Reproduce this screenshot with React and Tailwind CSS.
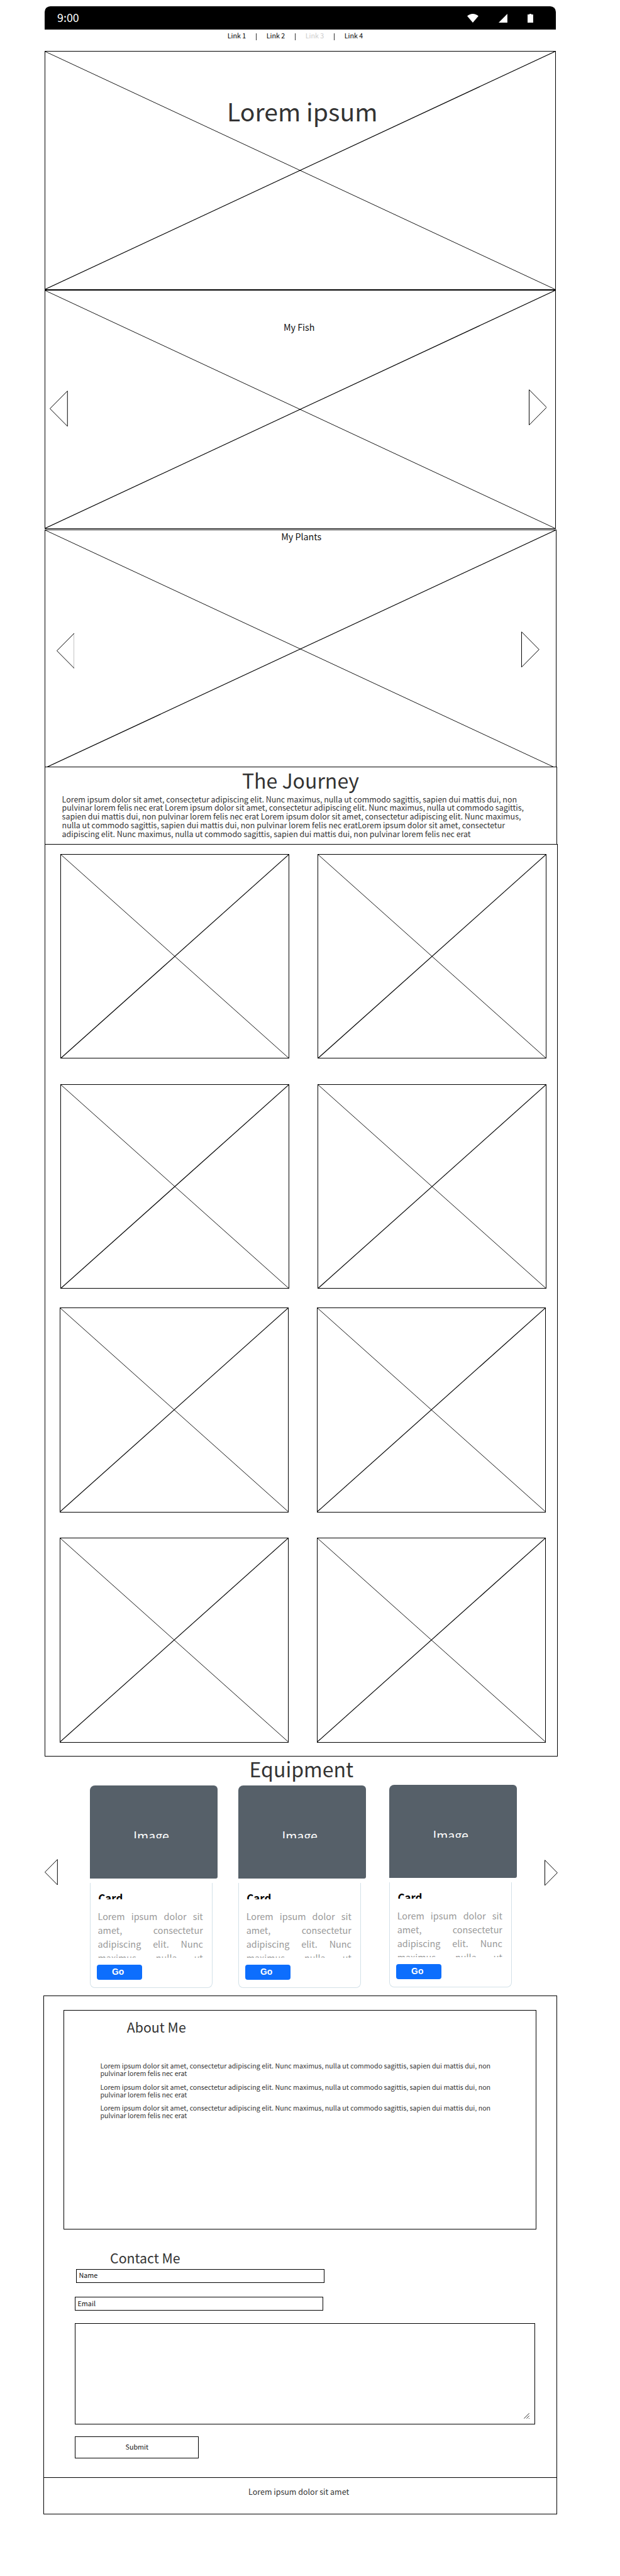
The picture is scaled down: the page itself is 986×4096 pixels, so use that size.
const LOREM_LINE =
  "Lorem ipsum dolor sit amet, consectetur adipiscing elit. Nunc maximus, nulla ut commodo sagittis, sapien dui mattis dui, non";

const JOURNEY = [
  LOREM_LINE,
  "pulvinar lorem felis nec erat Lorem ipsum dolor sit amet, consectetur adipiscing elit. Nunc maximus, nulla ut commodo sagittis,",
  "sapien dui mattis dui, non pulvinar lorem felis nec erat Lorem ipsum dolor sit amet, consectetur adipiscing elit. Nunc maximus,",
  "nulla ut commodo sagittis, sapien dui mattis dui, non pulvinar lorem felis nec eratLorem ipsum dolor sit amet, consectetur",
  "adipiscing elit. Nunc maximus, nulla ut commodo sagittis, sapien dui mattis dui, non pulvinar lorem felis nec erat",
];

const LINKS = [
  { label: "Link 1" },
  { label: "Link 2" },
  { label: "Link 3", disabled: true },
  { label: "Link 4" },
];

function Placeholder({ className, children }) {
  return (
    <div className={`relative border border-black bg-white ${className}`}>
      <svg
        className="absolute inset-0 h-full w-full"
        viewBox="0 0 100 100"
        preserveAspectRatio="none"
        fill="none"
      >
        <path d="M0 0L100 100" stroke="#111" strokeWidth="1" vectorEffect="non-scaling-stroke" />
        <path d="M0 100L100 0" stroke="#000" strokeWidth="1.2" vectorEffect="non-scaling-stroke" />
      </svg>
      <div className="relative">{children}</div>
    </div>
  );
}

function Arrow({ dir = "left", className, tall = true }) {
  const w = tall ? 29 : 21;
  const h = tall ? 58 : 42;
  const d =
    dir === "left"
      ? `M${w - 0.5} 0.7L0.5 ${h / 2}L${w - 0.5} ${h - 0.7}Z`
      : `M0.5 0.7L${w - 0.5} ${h / 2}L0.5 ${h - 0.7}Z`;
  return (
    <svg className={className} width={w} height={h} viewBox={`0 0 ${w} ${h}`} fill="none">
      <path d={d} stroke="#000" strokeWidth="1" />
    </svg>
  );
}

function StatusBar() {
  return (
    <header className="ml-[72px] flex h-[37px] w-[819px] items-start rounded-t-[9px] bg-black pl-[19.8px] pr-9 text-white">
      <span className="mt-[8.8px] text-[18px] leading-[18px]">9:00</span>
      <svg className="ml-auto mt-3" width="18" height="14" viewBox="0 0 18 14" fill="#fff">
        <path d="M9 14L0 3.600C2.600 1.200 5.600 0 9 0s6.400 1.200 9 3.600Z" />
      </svg>
      <svg className="ml-8 mt-3" width="14" height="14" viewBox="0 0 14 14" fill="#fff">
        <path d="M0 14L14 0V14Z" />
      </svg>
      <svg className="ml-[33px] mt-3" width="9" height="14" viewBox="0 0 9 14" fill="#fff">
        <path d="M0 1H3V0H6V1H9V14H0Z" />
      </svg>
    </header>
  );
}

function Nav() {
  return (
    <nav className="flex h-[35px] pl-[364.7px] text-[10.8px] leading-4">
      {LINKS.map((link, i) => (
        <div key={link.label} className="flex w-[62.5px] shrink-0">
          <span
            className={`mt-[2.3px] w-[45.8px] whitespace-nowrap ${link.disabled ? "text-[#ccc]" : "text-black"}`}
          >
            {link.label}
          </span>
          {i < LINKS.length - 1 && <span className="mt-1.5 h-3 w-px bg-[#333]" />}
        </div>
      ))}
    </nav>
  );
}

function Card({ className }) {
  return (
    <article className={`w-[205px] shrink-0 ${className}`}>
      <div className="h-[149px] rounded-tl-[8px] rounded-tr-[6px] rounded-br-[3px] bg-[#566069] pl-[70.1px] pt-[68.2px]">
        <div className="h-[16.5px] overflow-hidden text-[19.7px] leading-6 text-white">Image</div>
      </div>
      <div className="mt-[7px] h-[169px] w-[197px] rounded-b-[8px] border border-t-0 border-[#d3e1e8] pt-[14.6px]">
        <h3 className="ml-[12.5px] h-[11.4px] overflow-hidden text-[17px] font-bold leading-5 text-black">
          Card
        </h3>
        <p className="ml-[11.8px] mt-[17px] h-[77px] w-[168.6px] overflow-hidden text-justify text-[14.5px] leading-[22px] text-[#999] [text-align-last:justify]">
          Lorem ipsum dolor sit amet, consectetur adipiscing elit. Nunc maximus, nulla ut
        </p>
        <button className="ml-[10px] mt-[11px] block h-[25px] w-[73px] rounded-[4px] bg-[#0d6efd] pb-1 pl-[24.4px] text-left font-['Liberation_Sans',sans-serif] text-[14px] font-bold leading-4 text-white">
          <span className="mt-[3px] block">Go</span>
        </button>
      </div>
    </article>
  );
}

function Field({ label, className }) {
  return (
    <div className={`h-[22px] w-[398px] border border-black pl-[3.5px] text-[10.9px] leading-5 text-[#111] ${className}`}>
      <span className="-mt-[0.4px] block">{label}</span>
    </div>
  );
}

export default function App() {
  return (
    <div className="h-[4129px] w-[994px] overflow-hidden bg-white pt-[10px] font-['Noto_Sans_CJK_SC',sans-serif] text-[#333] [zoom:0.992]">
      <StatusBar />
      <Nav />

      <Placeholder className="ml-[72px] h-[383px] w-[819px]">
        <h1 className="pl-[290.9px] pt-[70.8px] text-[39.5px] leading-[48px]">Lorem ipsum</h1>
      </Placeholder>

      <Placeholder className="ml-[72px] h-[383px] w-[819px]">
        <h2 className="pl-[381.6px] pt-[47.7px] text-[14.4px] leading-5 text-[#111]">My Fish</h2>
        <Arrow className="absolute left-[6.4px] top-[160.2px]" />
        <Arrow dir="right" className="absolute left-[774.4px] top-[158.4px]" />
      </Placeholder>

      <Placeholder className="ml-[72px] mt-px h-[383px] w-[820px]">
        <h2 className="pl-[377.8px] text-[14.4px] leading-[19.4px] text-[#111]">My Plants</h2>
        <Arrow className="absolute left-[17.4px] top-[164.2px]" />
        <Arrow dir="right" className="absolute left-[762.8px] top-[161.8px]" />
      </Placeholder>

      <section className="relative -mt-[3px] ml-[72px] h-[124px] w-[821px] border border-b-0 border-black bg-white">
        <h2 className="pl-[315px] pt-[2.9px] text-[32.3px] leading-9">The Journey</h2>
        <div className="mt-[5.9px] pl-[26.4px] text-[12.56px] leading-[14px]">
          {JOURNEY.map((line) => (
            <p key={line} className="whitespace-nowrap">{line}</p>
          ))}
        </div>
      </section>

      <section className="ml-[72px] h-[1463px] w-[822px] border border-black pt-[15px]">
        <div className="ml-6 grid w-[779px] grid-cols-2 gap-x-[45px] gap-y-[41px]">
          <Placeholder className="h-[328px]" />
          <Placeholder className="h-[328px]" />
          <Placeholder className="h-[328px]" />
          <Placeholder className="h-[328px]" />
        </div>
        <div className="ml-[23px] mt-[30px] grid w-[779px] grid-cols-2 gap-x-[45px] gap-y-[41px]">
          <Placeholder className="h-[328px]" />
          <Placeholder className="h-[328px]" />
          <Placeholder className="h-[328px]" />
          <Placeholder className="h-[328px]" />
        </div>
      </section>

      <section className="h-[383px]">
        <h2 className="pl-[399.8px] pt-[1.9px] text-[32.3px] leading-9">Equipment</h2>
        <div className="ml-[72px] mt-[7.1px] flex items-start">
          <Arrow tall={false} className="mt-[119px] shrink-0" />
          <Card className="ml-[51px] mt-px" />
          <Card className="ml-[33px] mt-px" />
          <Card className="ml-[37px]" />
          <Arrow tall={false} dir="right" className="ml-[44.3px] mt-[119.8px] shrink-0" />
        </div>
      </section>

      <section className="ml-[70px] h-[772px] w-[823px] border border-b-0 border-black pt-[22px]">
        <div className="ml-[31px] h-[352px] w-[758px] border border-black pt-[11.9px]">
          <h2 className="pl-[100.4px] text-[21.5px] leading-7">About Me</h2>
          <div className="mt-[42.7px] flex flex-col gap-[10px] whitespace-nowrap pl-[57.7px] text-[10.77px] leading-3">
            {[0, 1, 2].map((i) => (
              <p key={i}>
                {LOREM_LINE}
                <br />
                pulvinar lorem felis nec erat
              </p>
            ))}
          </div>
        </div>
        <h2 className="mt-[30.9px] pl-[105.5px] text-[21.5px] leading-7">Contact Me</h2>
        <Field label="Name" className="ml-[51px] mt-[4.1px]" />
        <Field label="Email" className="ml-[49px] mt-[23px]" />
        <div className="ml-[49px] mt-[20px] flex h-[162px] w-[738px] items-end justify-end border border-black pb-[8px] pr-[8px]">
          <svg width="9" height="9" viewBox="0 0 9 9" fill="none" stroke="#111" strokeWidth="0.9">
            <path d="M0.3 8.700L8.700 0.300M4.300 8.700L8.700 4.300M8 9L9 8" />
          </svg>
        </div>
        <div className="ml-[49px] mt-[19px] h-[36px] w-[199px] border border-black pt-[6px] text-center text-[10.8px] leading-5 text-[#111]">
          Submit
        </div>
      </section>

      <footer className="ml-[70px] h-[59px] w-[823px] border border-black pl-[327.3px] pt-[13.2px] text-[12.6px] leading-5">
        Lorem ipsum dolor sit amet
      </footer>
    </div>
  );
}
